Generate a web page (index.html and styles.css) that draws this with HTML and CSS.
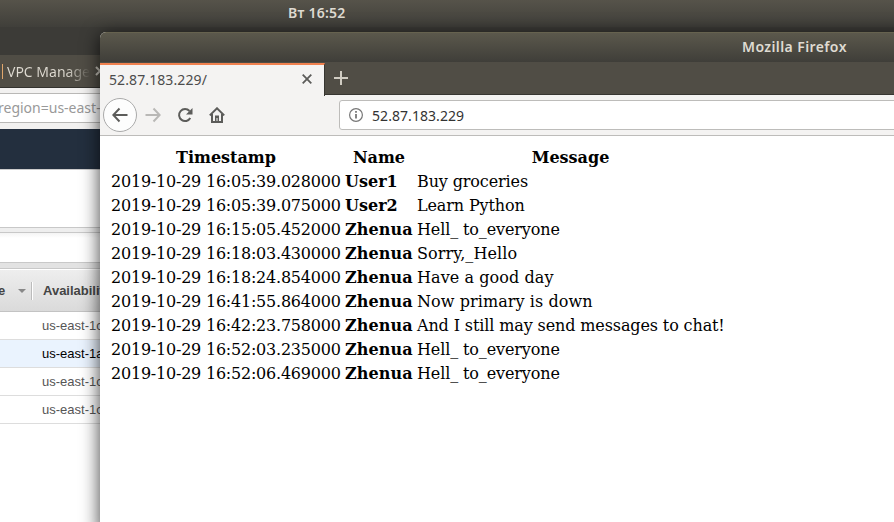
FILE: index.html
```
<!DOCTYPE html>
<html lang="en">
<head>
<meta charset="utf-8">
<title>Desktop</title>
<link rel="stylesheet" href="styles.css">
</head>
<body>
<header class="panel"><span class="clock">Вт 16:52</span></header>
<section class="window back">
  <div class="back-title"></div>
  <div class="back-tabs"><i class="mark"></i><span class="back-tab">VPC Manage</span>
    <svg class="back-close" width="10" height="10" viewBox="0 0 10 10"><path d="M1 1l8 8M9 1l-8 8"/></svg></div>
  <div class="back-nav"><div class="back-url">region=us-east-1</div></div>
  <div class="aws-nav"></div>
  <div class="aws-actions"></div>
  <div class="splitter"></div>
  <div class="aws-filter"></div>
  <div class="splitter two"></div>
  <div class="aws-head"><span class="col-e">e</span><i class="caret"></i><i class="sep"></i><span class="avail">Availability</span></div>
  <div class="aws-row">us-east-1c</div>
  <div class="aws-row selected">us-east-1a</div>
  <div class="aws-row">us-east-1c</div>
  <div class="aws-row">us-east-1c</div>
</section>
<main class="window front">
  <div class="title"><span>Mozilla Firefox</span></div>
  <div class="tabs">
    <div class="tab"><span>52.87.183.229/</span>
      <svg width="10" height="10" viewBox="0 0 10 10"><path d="M.7.7l8.6 8.6M9.3.7L.7 9.3"/></svg></div>
    <svg class="plus" width="14" height="14" viewBox="0 0 14 14"><path d="M7 0v14M0 7h14"/></svg>
  </div>
  <div class="nav">
    <div class="back-btn"><svg width="16" height="16" viewBox="0 0 16 16"><path d="M15.500 8H1.500M7.500 1.500L1.300 8l6.200 6.500"/></svg></div>
    <svg class="forward" width="16" height="16" viewBox="0 0 16 16"><path d="M.5 8h14M8.500 1.500L14.700 8l-6.200 6.500"/></svg>
    <svg class="reload" width="16" height="16" viewBox="0 0 16 16"><path d="M13.300 11A6 6 0 1 1 12.500 4"/><path class="fill" d="M15.500 1v6.500H9z"/></svg>
    <svg class="home" width="16" height="16" viewBox="0 0 16 16"><path d="M.8 8.400L8 1.300l7.200 7.100M3 7v8h10V7"/><path class="fill" fill-rule="evenodd" d="M6 8.500h4V15H6zM7.500 11h1v4h-1z"/></svg>
    <div class="url">
      <svg width="14" height="14" viewBox="0 0 14 14"><circle cx="7" cy="7" r="6.400"/><path class="stem" d="M7 6v4.500M7 3v1.700"/></svg>
      <span>52.87.183.229</span>
    </div>
  </div>
  <div class="page">
    <table>
      <colgroup><col class="c-time"><col class="c-name"><col class="c-msg"></colgroup>
      <tr><th>Timestamp</th><th>Name</th><th>Message</th></tr>
      <tr><td>2019-10-29 16:05:39.028000</td><td>User1</td><td>Buy groceries</td></tr>
      <tr><td>2019-10-29 16:05:39.075000</td><td>User2</td><td>Learn Python</td></tr>
      <tr><td>2019-10-29 16:15:05.452000</td><td class="wide">Zhenua</td><td>Hell_ to_everyone</td></tr>
      <tr><td>2019-10-29 16:18:03.430000</td><td class="wide">Zhenua</td><td class="wide">Sorry,_Hello</td></tr>
      <tr><td>2019-10-29 16:18:24.854000</td><td class="wide">Zhenua</td><td class="wide">Have a good day</td></tr>
      <tr><td>2019-10-29 16:41:55.864000</td><td class="wide">Zhenua</td><td class="wide">Now primary is down</td></tr>
      <tr><td>2019-10-29 16:42:23.758000</td><td class="wide">Zhenua</td><td>And I still may send messages to chat!</td></tr>
      <tr><td>2019-10-29 16:52:03.235000</td><td class="wide">Zhenua</td><td>Hell_ to_everyone</td></tr>
      <tr><td>2019-10-29 16:52:06.469000</td><td class="wide">Zhenua</td><td>Hell_ to_everyone</td></tr>
    </table>
  </div>
</main>
</body>
</html>
```
FILE: styles.css
```
* { box-sizing: border-box; }
body { margin: 0; width: 894px; height: 522px; overflow: hidden; position: relative; background: #3c3b37; font-family: "Noto Sans", sans-serif; }
svg { fill: none; stroke: #5c5c5a; stroke-width: 2; flex: none; display: block; }
.fill { fill: #5c5c5a; stroke: none; }
.panel { height: 27px; background: linear-gradient(#56534a, #403f3a); padding-left: 288px; color: #dfdbd2; font-weight: 600; font-size: 14px; line-height: 26px; white-space: nowrap; }
.clock { letter-spacing: .25px; }
.window { position: absolute; overflow: hidden; }
.back { left: 0; top: 27px; width: 140px; height: 495px; background: #fff; }
.back-title { height: 28px; background: #3c3b37; }
.back-tabs { height: 33px; background: #504d45; border-bottom: 1px solid #33322e; display: flex; align-items: center; color: #dfdbd2; font-size: 14px; }
.mark { width: 1px; height: 15px; background: #e0a66c; margin-left: 2px; }
.back-tab { margin-left: 4px; width: 84px; white-space: nowrap; background: linear-gradient(90deg, #dfdbd2 70%, #dfdbd200 99%); background-clip: text; -webkit-background-clip: text; color: transparent; }
.back-close { margin-left: 4px; stroke: #c9c5bc; }
.back-nav { height: 41px; background: #f2f1f0; padding-top: 5px; }
.back-url { height: 30px; border: solid #b9b8b6; border-width: 1px 0; background: #fff; color: #999; font-size: 14px; line-height: 28px; margin-left: -2px; white-space: nowrap; }
.aws-nav { height: 40px; background: #232f3e; }
.aws-actions { height: 58px; border-top: 1px solid #ccc; }
.splitter { height: 6px; border: solid #c8c8c8; border-width: 1px 0; background: #eee; }
.aws-filter { height: 29px; background: linear-gradient(#f4f4f4, #fff 5px); }
.two { height: 7px; background: #e2e2e2; }
.aws-head { height: 43px; border-top: 1px solid #fff; border-bottom: 1px solid #c3c3c3; background: linear-gradient(#eee, #dadada); display: flex; align-items: center; font: bold 13px "Liberation Sans", sans-serif; color: #444; }
.col-e { width: 18px; margin-left: -2px; }
.caret { border: 4px solid transparent; border-top-color: #888; border-bottom: 0; margin-left: 2px; }
.sep { height: 18px; width: 2px; background: #bbb; border-right: 1px solid #fff; margin-left: 5px; }
.avail { margin-left: 10px; }
.aws-row { height: 28px; border-bottom: 1px solid #ddd; padding-left: 42px; font: 13px/27px "Liberation Sans", sans-serif; color: #555; }
.selected { background: #eaf3fe; color: #000; }
.front { left: 100px; top: 32px; width: 820px; height: 500px; background: #fff; border-radius: 6px 0 0 0; box-shadow: 0 3px 18px 1px rgba(0,0,0,.7); }
.title { height: 30px; background: linear-gradient(#5b584c, #3f3e39); border-top: 1px solid #66624f; padding-left: 642px; color: #dfdbd2; font-weight: 600; font-size: 14px; letter-spacing: .4px; line-height: 28px; white-space: nowrap; }
.tabs { height: 33px; background: #504d45; border-bottom: 1px solid #373631; display: flex; align-items: center; }
.tab { width: 225px; height: 33px; margin-top: 2px; border-top: 2px solid #f0814f; border-right: 1px solid #373631; background: #f4f3f2; color: #4c4c4c; display: flex; align-items: center; padding: 0 12px 2px 9px; justify-content: space-between; font-size: 14px; letter-spacing: .1px; z-index: 1; }
.tab svg { stroke-width: 1.800; }
.plus { margin-left: 9px; stroke: #d0ccc2; }
.nav { height: 41px; background: #f4f3f2; border-bottom: 1px solid #bdbcba; display: flex; align-items: center; padding-left: 3px; }
.back-btn { width: 34px; height: 34px; flex: none; border: 1px solid #aaa; border-radius: 50%; background: #fdfdfd; display: grid; place-items: center; }
.forward { margin-left: 8px; stroke: #b9b8b6; }
.reload { margin-left: 16px; }
.home { margin-left: 16px; }
.url { width: 600px; height: 30px; margin-left: 114px; border: 1px solid #bdbcba; border-radius: 3px; background: #fff; display: flex; align-items: center; gap: 9px; padding-left: 9px; color: #333; font-size: 14px; letter-spacing: .06px; flex: none; }
.url svg { stroke: #777; stroke-width: 1.200; }
.url .stem { stroke-width: 1.800; }
.page { padding: 9px 8px; }
table { table-layout: fixed; width: 619px; border-spacing: 2px; font: 16px/20px "DejaVu Serif", serif; color: #000; }
.c-time { width: 232px; }
.c-name { width: 70px; }
.c-msg { width: 309px; }
th, td { padding: 1px; white-space: nowrap; }
td:first-child { letter-spacing: -.22px; }
td:nth-child(2) { font-weight: bold; }
td:nth-child(3) { letter-spacing: -.12px; }
td.wide { letter-spacing: .08px; }
```
